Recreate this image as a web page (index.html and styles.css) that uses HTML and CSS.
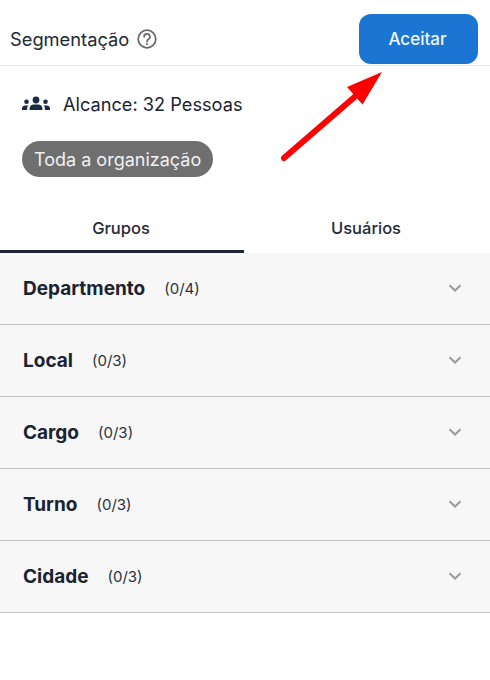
FILE: index.html
```html
<!DOCTYPE html>
<html lang="pt">
<head>
<meta charset="utf-8">
<title>Segmentação</title>
<link rel="stylesheet" href="styles.css">
</head>
<body>
<div class="page">
  <header class="top">
    <div class="title">
      <span>Segmentação</span>
      <svg class="help" viewBox="0 0 20 20" width="20" height="20" aria-hidden="true">
        <circle cx="10" cy="10" r="8.8" fill="none" stroke="#666" stroke-width="1.7"/>
        <path d="M7.1 7.800a2.900 2.900 0 1 1 4.400 2.400c-1 .6-1.500 1.100-1.500 2.200" fill="none" stroke="#666" stroke-width="1.700" stroke-linecap="round"/>
        <circle cx="10" cy="15" r="1.100" fill="#666"/>
      </svg>
    </div>
    <button class="accept">Aceitar</button>
  </header>
  <div class="reach">
    <svg class="people" viewBox="0 0 30 20" width="30" height="20" aria-hidden="true">
      <circle cx="15" cy="6" r="3.4"/>
      <path d="M8.6 16v-1.6c0-2.4 2-3.9 4-3.9h4.8c2 0 4 1.500 4 3.900V16z"/>
      <circle cx="5.500" cy="7.800" r="2.300"/>
      <circle cx="24.500" cy="7.800" r="2.300"/>
      <path d="M1 16v-1.400c0-2 1.500-3.100 3-3.100h3.300c-.8 .9-1.200 1.900-1.200 3V16z"/>
      <path d="M29 16v-1.400c0-2-1.500-3.100-3-3.100h-3.300c.8 .9 1.200 1.900 1.200 3V16z"/>
    </svg>
    <span>Alcance: 32 Pessoas</span>
  </div>
  <div class="chip-row"><span class="chip">Toda a organização</span></div>
  <nav class="tabs">
    <div class="tab active">Grupos</div>
    <div class="tab">Usuários</div>
  </nav>
  <section class="list">
    <div class="row"><b>Departmento</b><span class="count">(0/4)</span><svg class="chev" viewBox="0 0 14 8" width="14" height="8" aria-hidden="true"><path d="M1.500 1.200 7 6.500l5.500-5.300"/></svg></div>
    <div class="row"><b>Local</b><span class="count">(0/3)</span><svg class="chev" viewBox="0 0 14 8" width="14" height="8" aria-hidden="true"><path d="M1.500 1.200 7 6.500l5.500-5.300"/></svg></div>
    <div class="row"><b>Cargo</b><span class="count">(0/3)</span><svg class="chev" viewBox="0 0 14 8" width="14" height="8" aria-hidden="true"><path d="M1.500 1.200 7 6.500l5.500-5.300"/></svg></div>
    <div class="row"><b>Turno</b><span class="count">(0/3)</span><svg class="chev" viewBox="0 0 14 8" width="14" height="8" aria-hidden="true"><path d="M1.500 1.200 7 6.500l5.500-5.300"/></svg></div>
    <div class="row"><b>Cidade</b><span class="count">(0/3)</span><svg class="chev" viewBox="0 0 14 8" width="14" height="8" aria-hidden="true"><path d="M1.500 1.200 7 6.500l5.500-5.300"/></svg></div>
  </section>
  <svg class="arrow" viewBox="0 0 490 680" width="490" height="680" aria-hidden="true">
    <path d="M284 158 358 94" stroke="#ff0000" stroke-width="6" stroke-linecap="round" fill="none"/>
    <path d="M382 72 347 87 362.500 104.500 Z" fill="#ff0000"/>
  </svg>
</div>
</body>
</html>
```

FILE: styles.css
```css
* { box-sizing: border-box; }
html, body { margin: 0; padding: 0; background: #fff; }
body { font-family: Inter, "Liberation Sans", sans-serif; color: #1a2233; }
.page { position: relative; width: 490px; height: 680px; overflow: hidden; }
.top {
  height: 66px;
  padding: 14px 12px 0 10px;
  display: flex;
  justify-content: space-between;
  align-items: flex-start;
  border-bottom: 1px solid #e6e6e6;
}
.title { display: flex; align-items: center; gap: 8px; height: 50px; font-size: 18.3px; color: #222833; }
.help { display: block; }
.accept {
  width: 119px;
  height: 50px;
  padding: 0 2px 0 0;
  border: 0;
  border-radius: 12px;
  background: #1b76d3;
  color: #f2f7fc;
  font: 500 17px Inter, "Liberation Sans", sans-serif;
}
.reach { display: flex; align-items: center; gap: 12px; padding: 0 0 0 21px; height: 24px; margin-top: 26px; font-size: 18.2px; }
.people { fill: #1a2a44; display: block; }
.chip-row { margin-top: 25px; padding-left: 22px; height: 36px; }
.chip {
  display: inline-flex;
  align-items: center;
  height: 36px;
  padding: 0 12px;
  border-radius: 18px;
  background: #6f6f6f;
  color: #f1f1f1;
  font-size: 18px;
}
.tabs { display: flex; margin-top: 23px; height: 53px; }
.tab {
  width: 244px;
  height: 53px;
  padding-top: 18px;
  padding-right: 2px;
  text-align: center;
  font-size: 16.5px;
  line-height: 20px;
  font-weight: 500;
  color: #252b38;
}
.tab + .tab { width: 246px; }
.tab.active { border-bottom: 3px solid #1e2532; }
.list { background: #f7f7f7; }
.row {
  display: flex;
  align-items: center;
  height: 72px;
  padding: 0 28px 2px 23px;
  border-bottom: 1px solid #c4c4c4;
}
.row b { font-size: 19px; font-weight: 700; color: #1a2233; margin-top: 2px; }
.count { margin-left: 19px; margin-top: 2px; font-size: 15px; color: #2b3140; }
.chev { margin-left: auto; fill: none; stroke: #9a9a9a; stroke-width: 2; }
.arrow { position: absolute; left: 0; top: 0; pointer-events: none; }
```
